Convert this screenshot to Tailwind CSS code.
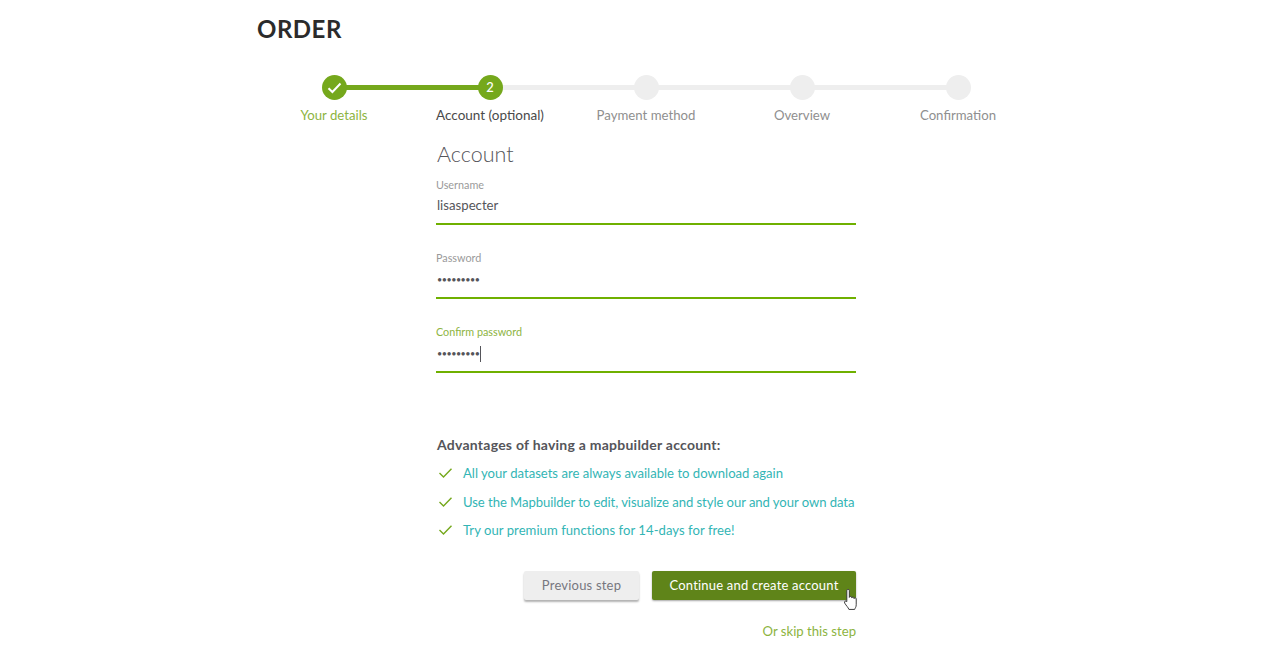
<!DOCTYPE html>
<html lang="en">
<head>
  <meta charset="UTF-8">
  <title>Order</title>
  <script src="https://cdn.jsdelivr.net/npm/@tailwindcss/browser@4"></script>
</head>
<body class="bg-white font-['Lato',sans-serif] overflow-hidden">
<div class="ml-[256px] w-[780px] h-[653px]">
  <h1 class="pl-px pt-[14px] h-[75px] text-[24px] leading-[29px] font-bold tracking-[0.5px] text-[#2b2b2b]">ORDER</h1>

  <!-- steps -->
  <div class="relative grid grid-cols-5">
    <div class="absolute left-[78px] top-[10px] w-[624px] h-[5px] bg-[#eeeeee]"></div>
    <div class="absolute left-[78px] top-[10px] w-[156px] h-[5px] bg-[#75a81c]"></div>

    <div class="relative flex flex-col items-center">
      <div class="w-[25px] h-[25px] rounded-full bg-[#75a81c] flex items-center justify-center">
        <svg width="15" height="12" viewBox="0 0 15 12" fill="none" stroke="#fff" stroke-width="2"><path d="M1.500 6.200 5.400 10 13.500 1.500"/></svg>
      </div>
      <span class="mt-[5px] text-[13.200px] leading-[20px] text-[#8db43f]">Your details</span>
    </div>
    <div class="relative flex flex-col items-center">
      <div class="w-[25px] h-[25px] rounded-full bg-[#75a81c] flex items-center justify-center text-white text-[13px] font-medium">2</div>
      <span class="mt-[5px] text-[13.500px] leading-[20px] text-[#4a4a4a]">Account (optional)</span>
    </div>
    <div class="relative flex flex-col items-center">
      <div class="w-[25px] h-[25px] rounded-full bg-[#eeeeee]"></div>
      <span class="mt-[5px] text-[13.200px] leading-[20px] text-[#8f8f8f]">Payment method</span>
    </div>
    <div class="relative flex flex-col items-center">
      <div class="w-[25px] h-[25px] rounded-full bg-[#eeeeee]"></div>
      <span class="mt-[5px] text-[13.200px] leading-[20px] text-[#8f8f8f]">Overview</span>
    </div>
    <div class="relative flex flex-col items-center">
      <div class="w-[25px] h-[25px] rounded-full bg-[#eeeeee]"></div>
      <span class="mt-[5px] text-[13.200px] leading-[20px] text-[#8f8f8f]">Confirmation</span>
    </div>
  </div>

  <!-- form -->
  <div class="ml-[180px] w-[420px]">
    <h2 class="pl-px mt-[15px] text-[21.500px] leading-[28px] font-light text-[#55555a]">Account</h2>

    <div class="mt-[9px] pt-px h-[48px] border-b-2 border-[#6fb000]">
      <div class="text-[10.800px] leading-[14px] text-[#9a9a9a]">Username</div>
      <div class="pl-px mt-[3px] text-[13.200px] leading-[20px] text-[#55555a]">lisaspecter</div>
    </div>
    <div class="mt-[26px] h-[48px] border-b-2 border-[#6fb000]">
      <div class="text-[10.800px] leading-[14px] text-[#9a9a9a]">Password</div>
      <div class="pl-px mt-[4.500px] text-[9px] leading-[20px] text-[#55555a] tracking-[-0.5px]">•••••••••</div>
    </div>
    <div class="mt-[26px] h-[48px] border-b-2 border-[#6fb000]">
      <div class="text-[10.800px] leading-[14px] text-[#8db43f]">Confirm password</div>
      <div class="pl-px mt-[5px] flex items-center h-[20px] text-[9px] leading-[20px] text-[#55555a] tracking-[-0.5px]">•••••••••<span class="ml-[0.5px] w-px h-[16px] bg-[#55555a]"></span></div>
    </div>

    <h3 class="pl-px mt-[62px] text-[14px] leading-[20px] font-bold tracking-[0.24px] text-[#55555a]">Advantages of having a mapbuilder account:</h3>
    <ul class="mt-[8px] flex flex-col gap-[8.500px] text-[13.100px] leading-[20px] text-[#33b5b5]">
      <li class="flex items-center h-[20px]">
        <svg class="shrink-0 ml-[3px] mr-[11px]" width="13" height="10" viewBox="0 0 13 10" fill="none" stroke="#75a81c" stroke-width="1.400"><path d="M.5 5 4.500 9 12.500.7"/></svg>
        <span class="whitespace-nowrap">All your datasets are always available to download again</span>
      </li>
      <li class="flex items-center h-[20px]">
        <svg class="shrink-0 ml-[3px] mr-[11px]" width="13" height="10" viewBox="0 0 13 10" fill="none" stroke="#75a81c" stroke-width="1.400"><path d="M.5 5 4.500 9 12.500.7"/></svg>
        <span class="whitespace-nowrap tracking-[-0.06px]">Use the Mapbuilder to edit, visualize and style our and your own data</span>
      </li>
      <li class="flex items-center h-[20px]">
        <svg class="shrink-0 ml-[3px] mr-[11px]" width="13" height="10" viewBox="0 0 13 10" fill="none" stroke="#75a81c" stroke-width="1.400"><path d="M.5 5 4.500 9 12.500.7"/></svg>
        <span class="whitespace-nowrap tracking-[0.04px]">Try our premium functions for 14-days for free!</span>
      </li>
    </ul>

    <div class="mt-[31px] flex justify-end gap-[13px]">
      <button class="w-[115px] h-[29px] rounded-[2px] bg-[#eeeeee] text-[13px] tracking-[0.2px] text-[#77777f] shadow-[0_2px_2px_rgba(0,0,0,0.3)]">Previous step</button>
      <button class="relative w-[204px] h-[29px] rounded-[2px] bg-[#5f8419] text-[13px] tracking-[0.2px] text-white shadow-[0_1px_2px_rgba(0,0,0,0.35)]">Continue and create account
        <svg class="absolute left-[191px] top-[17px]" width="16" height="23" viewBox="0 0 15 22" fill="#fff" stroke="#333" stroke-width="0.9" stroke-linejoin="round"><path d="M3.500 13V2.500c0-1.600 2.400-1.600 2.400 0V9c0-1.200 2.300-1.200 2.300 0v.6c0-1.200 2.200-1.200 2.200 0v.6c0-1.100 2.100-1.100 2.100.2V16c0 2.300-1 3-1.500 4.500H5.500C4.800 18.500 3 17 1.500 14.500.6 12.800 2.300 11.800 3.500 13Z"/></svg>
      </button>
    </div>
    <div class="mt-[21px] text-right text-[13.150px] leading-[20px] text-[#8db43f]">Or skip this step</div>
  </div>
</div>
</body>
</html>
